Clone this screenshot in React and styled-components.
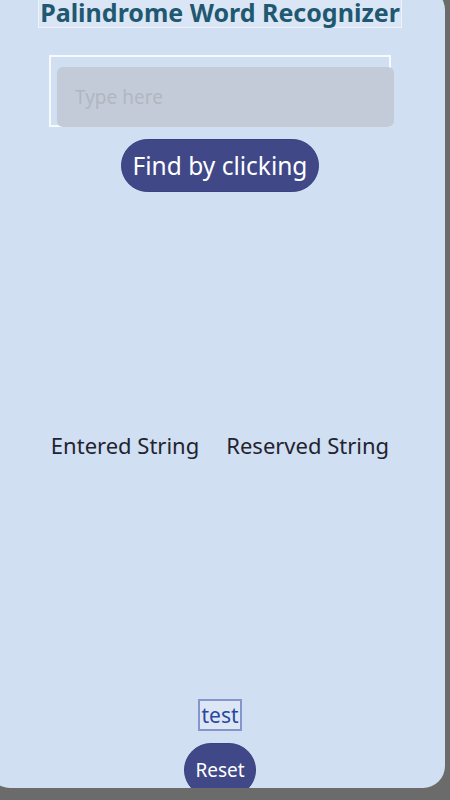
import React, { useState } from 'react'
import styled, { createGlobalStyle } from 'styled-components'

const GlobalStyle = createGlobalStyle`
  html, body {
    margin: 0;
    padding: 0;
    background: #6b6b6b;
    overflow: hidden;
  }
  * { box-sizing: border-box; }
`

function App() {
  const [text, setText] = useState('')
  const [shown, setShown] = useState('test')

  return (
    <>
      <GlobalStyle />
      <Card>
        <Title>Palindrome Word Recognizer</Title>
        <InputFrame>
          <TextInput
            placeholder="Type here"
            value={text}
            onChange={(e) => setText(e.target.value)}
          />
        </InputFrame>
        <PillButton $size="big" onClick={() => setShown(text)}>Find by clicking</PillButton>
        <Labels>
          <span>Entered String</span>
          <span>Reserved String</span>
        </Labels>
        <Result>{shown}</Result>
        <PillButton $size="small" onClick={() => { setText(''); setShown('') }}>Reset</PillButton>
      </Card>
    </>
  )
}

export default App

const Card = styled.div`
  margin: -12px 0 0 -12px;
  width: 457px;
  height: 800px;
  padding: 8px 5px 0 12px;
  background: #d0dff1;
  border-radius: 22px;
  overflow: hidden;
  display: flex;
  flex-direction: column;
  align-items: center;
  font-family: "Noto Sans", "Open Sans", sans-serif;
`
const Title = styled.h1`
  margin: 0;
  padding: 0 1px;
  font-size: 25px;
  line-height: 30px;
  font-weight: 700;
  color: #1f5870;
  background: #dae6f5;
  border: 1px solid #eef3fb;
`
const InputFrame = styled.div`
  margin-top: 27px;
  width: 342px;
  height: 72px;
  border: 2px solid #f6f9fd;
  display: flex;
  align-items: flex-start;
`
const TextInput = styled.input`
  margin: 10px 0 0 6px;
  flex: none;
  width: 337px;
  height: 60px;
  border: none;
  border-radius: 6px;
  background: #c3cbd9;
  padding: 0 0 0 18px;
  font-family: inherit;
  font-size: 19px;
  color: #333;
  outline: none;
  &::placeholder {
    color: #b2b6c0;
  }
`
const PillButton = styled.button`
  flex: none;
  margin-top: 12px;
  height: ${(p) => (p.$size === 'big' ? '53px' : '54px')};
  padding: ${(p) => (p.$size === 'big' ? '0 11px' : '0 10px')};
  border: 1px solid #3a4180;
  border-radius: 30px;
  background: #404888;
  color: #fff;
  font-family: inherit;
  font-size: ${(p) => (p.$size === 'big' ? '24.5px' : '19px')};
  cursor: pointer;
`
const Labels = styled.div`
  margin-top: 238px;
  display: flex;
  gap: 27px;
  font-size: 22px;
  color: #232330;
`
const Result = styled.div`
  margin-top: 239px;
  padding: 0 1px;
  border: 2px solid #8496cc;
  background: #dce6f5;
  color: #2a46a0;
  font-size: 21px;
  line-height: 28px;
`
